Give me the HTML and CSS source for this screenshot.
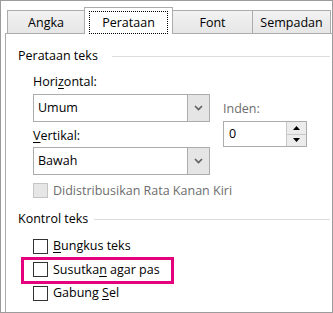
FILE: index.html
```html
<!DOCTYPE html>
<html lang="id">
<head>
  <meta charset="UTF-8">
  <title>Format Sel - Perataan</title>
  <link rel="stylesheet" href="styles.css">
</head>
<body>
  <div class="frame">
    <div class="tabs">
      <div class="tab tab-first tab-angka">Angka</div>
      <div class="tab tab-active tab-perataan"><span class="tab-label">Perataan</span></div>
      <div class="tab tab-font">Font</div>
      <div class="tab tab-sempadan">Sempadan</div>
    </div>

    <div class="panel">
      <!-- Perataan teks group -->
      <div class="group-head">
        <span>Perataan teks</span>
        <div class="rule rule-wide"></div>
      </div>
      <div class="indent">
        <div class="align-row">
          <div class="col-left">
            <label class="field-label">Hori<u>z</u>ontal:</label>
            <div class="combo">
              <span class="combo-value">Umum</span>
              <span class="combo-btn">
                <svg width="9" height="6" viewBox="0 0 9 6"><polyline points="1,1 4.5,4.5 8,1" fill="none" stroke="#5f5f5f" stroke-width="1.6"/></svg>
              </span>
            </div>
            <label class="field-label label-vertikal"><u>V</u>ertikal:</label>
            <div class="combo combo-bawah">
              <span class="combo-value">Bawah</span>
              <span class="combo-btn">
                <svg width="9" height="6" viewBox="0 0 9 6"><polyline points="1,1 4.5,4.5 8,1" fill="none" stroke="#5f5f5f" stroke-width="1.6"/></svg>
              </span>
            </div>
          </div>
          <div class="col-right">
            <label class="field-label muted">Inden:</label>
            <div class="spin">
              <span class="spin-value">0</span>
              <span class="spin-buttons">
                <span class="spin-btn">
                  <svg width="7" height="4" viewBox="0 0 7 4"><polygon points="0,4 3.5,0 7,4" fill="#000"/></svg>
                </span>
                <span class="spin-btn">
                  <svg width="7" height="4" viewBox="0 0 7 4"><polygon points="0,0 7,0 3.5,4" fill="#000"/></svg>
                </span>
              </span>
            </div>
          </div>
        </div>
        <div class="check-row row-disabled">
          <span class="checkbox checkbox-disabled"></span>
          <span class="muted">Didistribusikan Rata Kanan Kiri</span>
        </div>
      </div>

      <!-- Kontrol teks group -->
      <div class="group-head group-kontrol">
        <span>Kontrol teks</span>
        <div class="rule"></div>
      </div>
      <div class="indent checks">
        <div class="check-row">
          <span class="checkbox"></span>
          <span><u>B</u>ungkus teks</span>
        </div>
        <div class="check-row marked">
          <span class="checkbox"></span>
          <span>Susutka<u>n</u> agar pas</span>
        </div>
        <div class="check-row">
          <span class="checkbox"></span>
          <span>Gabung <u>S</u>el</span>
        </div>
      </div>
    </div>
  </div>
</body>
</html>
```

FILE: styles.css
```css
body {
  margin: 0;
  background: #fff;
  font-family: "Open Sans", "Noto Sans", sans-serif;
  font-size: 12.5px;
  line-height: 16px;
  color: #000;
}
u {
  text-decoration-thickness: 1px;
  text-underline-offset: 2px;
}
.frame {
  width: 333px;
  height: 313px;
  box-sizing: border-box;
  border: 1px solid #9c9c9c;
  background: #fff;
  overflow: hidden;
}

/* tabs */
.tabs {
  display: flex;
  align-items: flex-end;
  height: 32px;
  padding-left: 6px;
}
.tab {
  box-sizing: border-box;
  height: 23px;
  margin-left: -1px;
  padding-top: 2px;
  border: 1px solid #acacac;
  border-bottom: none;
  background: linear-gradient(#f2f2f2, #e6e6e6);
  display: flex;
  align-items: center;
  justify-content: center;
}
.tab-first { margin-left: 0; }
.tab-angka { width: 78px; }
.tab-perataan { width: 89px; }
.tab-font { width: 81px; }
.tab-sempadan { width: 79px; }
.tab-active {
  position: relative;
  z-index: 1;
  height: 27px;
  margin-bottom: -1px;
  padding: 3px 4px 0;
  background: #fff;
  align-items: stretch;
}
.tab-label {
  flex: 1;
  border: 1px dotted #000;
  display: flex;
  align-items: center;
  justify-content: center;
}

/* panel */
.panel {
  box-sizing: border-box;
  width: 340px;
  height: 300px;
  margin-left: 4px;
  padding: 14px 14px 0 12px;
  border: 1px solid #acacac;
}
.group-head {
  display: flex;
  height: 16px;
}
.rule {
  flex: 1;
  height: 0;
  margin-top: 8px;
  margin-left: 6px;
  border-top: 1px solid #dcdcdc;
}
.rule-wide { margin-left: 14px; }
.group-kontrol { margin-top: 8.5px; }
.indent { padding-left: 15px; }

.align-row {
  display: flex;
  gap: 13px;
  margin-top: 10px;
}
.col-left { width: 177px; }
.col-right { padding-top: 27px; }
.field-label { display: block; }
.label-vertikal { margin-top: 6px; }
.muted { color: #6d6d6d; }

.combo {
  box-sizing: border-box;
  display: flex;
  height: 28px;
  margin-top: 4px;
  border: 1px solid #acacac;
  background: #fff;
}
.combo-bawah { margin-top: 3px; }
.combo-value {
  flex: 1;
  padding-left: 4px;
  display: flex;
  align-items: center;
}
.combo-btn {
  width: 21px;
  border-left: 1px solid #acacac;
  background: #e5e5e5;
  display: flex;
  align-items: center;
  justify-content: center;
}

.spin {
  box-sizing: border-box;
  display: flex;
  width: 84px;
  height: 26px;
  margin-top: 4px;
  border: 1px solid #acacac;
}
.spin-value {
  flex: 1;
  padding-left: 5px;
  display: flex;
  align-items: center;
}
.spin-buttons {
  display: flex;
  flex-direction: column;
  width: 19px;
  border-left: 1px solid #c8c8c8;
}
.spin-btn {
  flex: 1;
  background: #ececec;
  display: flex;
  align-items: center;
  justify-content: center;
}
.spin-btn + .spin-btn { border-top: 1px solid #c8c8c8; }

/* checkboxes */
.check-row {
  display: flex;
  align-items: center;
  height: 23.5px;
}
.row-disabled { margin-top: 4px; }
.checks { margin-top: 7.5px; }
.checkbox {
  box-sizing: border-box;
  width: 15px;
  height: 15px;
  margin-right: 5px;
  border: 1px solid #333;
  background: #fff;
}
.checkbox-disabled {
  border-color: #c4c4c4;
  background: #e6e6e6;
}
.marked { position: relative; }
.marked::after {
  content: "";
  position: absolute;
  left: -12px;
  top: -1px;
  width: 153px;
  height: 27px;
  box-sizing: border-box;
  border: 3px solid #e4007c;
}
```
